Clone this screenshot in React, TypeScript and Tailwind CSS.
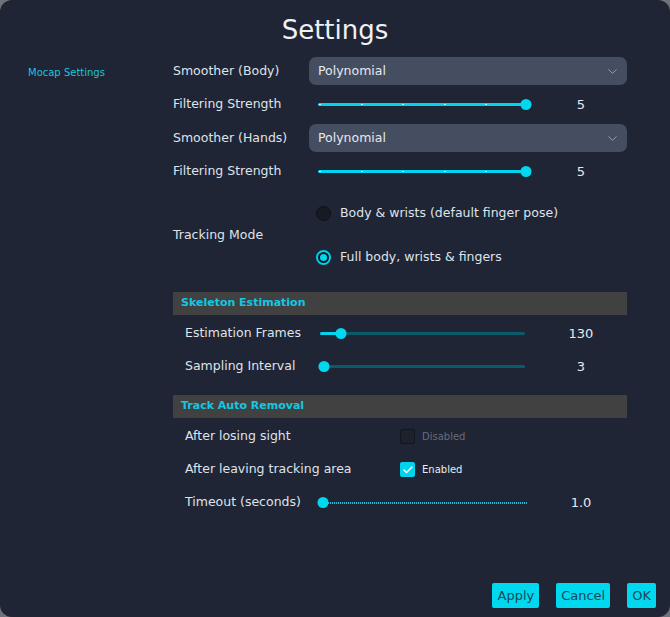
import { ChevronDown, Check } from "lucide-react";

const FONT = { fontFamily: '"DejaVu Sans", "Liberation Sans", sans-serif' };

type SliderProps = {
  width: number;
  pos: number; // 0..1
  kind: "ticks" | "range" | "dotted";
};

function Slider({ width, pos, kind }: SliderProps) {
  const left = Math.round(pos * width);
  return (
    <div className="relative h-[12px]" style={{ width }}>
      {kind === "dotted" ? (
        <div className="absolute left-0 right-0 top-[5px] h-[2px] bg-[repeating-linear-gradient(90deg,#2bb4c8_0_1px,#0b4655_1px_2px)]" />
      ) : (
        <div className="absolute left-0 right-0 top-[4.5px] h-[3px] rounded-full bg-[#0b5a6a]" />
      )}
      {kind !== "dotted" && (
        <div
          className="absolute left-0 top-[4.5px] h-[3px] rounded-full bg-[#00d5ee]"
          style={{ width: left }}
        />
      )}
      {kind === "ticks" &&
        [0, 0.2, 0.4, 0.6, 0.8].map((t) => (
          <div
            key={t}
            className="absolute top-[5.5px] h-[1px] w-[2px] bg-[#c9f6fc]"
            style={{ left: Math.round(t * width) + 1 }}
          />
        ))}
      <div
        className="absolute top-[0.5px] h-[11px] w-[11px] -translate-x-1/2 rounded-full bg-[#00d8f0]"
        style={{ left }}
      />
    </div>
  );
}

function Dropdown({ value }: { value: string }) {
  return (
    <div className="flex h-[28px] w-[318px] items-center justify-between rounded-[7px] bg-[#454d60] pl-[9px] pr-[7px] text-[12.5px] text-[#e6e9ee]">
      <span>{value}</span>
      <ChevronDown size={15} strokeWidth={1.3} className="text-[#aab1bd]" />
    </div>
  );
}

function SectionHeader({ title }: { title: string }) {
  return (
    <div className="flex h-[23px] items-center bg-[#414141] pl-[8px] text-[11px] font-bold text-[#12c8e2]">
      {title}
    </div>
  );
}

function Radio({ checked, label }: { checked: boolean; label: string }) {
  return (
    <div className="flex h-[44px] items-center pl-[7px] text-[12.5px] text-[#dfe3ea]">
      {checked ? (
        <span className="flex h-[15px] w-[15px] items-center justify-center rounded-full border-2 border-[#00d3ec] bg-[#141922]">
          <span className="h-[7px] w-[7px] rounded-full bg-[#00d8f0]" />
        </span>
      ) : (
        <span className="h-[15px] w-[15px] rounded-full border border-[#0e1218] bg-[#151a23]" />
      )}
      <span className="ml-[9px]">{label}</span>
    </div>
  );
}

function TopSliderRow({ label, value }: { label: string; value: string }) {
  return (
    <div className="flex h-[39px] items-center">
      <div className="w-[136px]">{label}</div>
      <div className="pl-[9px]">
        <Slider width={208} pos={1} kind="ticks" />
      </div>
      <div className="ml-[25px] w-[60px] text-center text-[13px] text-[#e6e9ee]">{value}</div>
    </div>
  );
}

function SubSliderRow({
  label,
  value,
  pos,
  kind,
  width,
}: {
  label: string;
  value: string;
  pos: number;
  kind: "range" | "dotted";
  width: number;
}) {
  return (
    <div className="flex h-[33px] items-center">
      <div className="w-[147px] pl-[12px]">{label}</div>
      <Slider width={width} pos={pos} kind={kind} />
      <div
        className="w-[60px] text-center text-[13px] text-[#e6e9ee]"
        style={{ marginLeft: 231 - width }}
      >
        {value}
      </div>
    </div>
  );
}

function CheckRow({ label, enabled }: { label: string; enabled: boolean }) {
  return (
    <div className="flex h-[33px] items-center">
      <div className="w-[227px] pl-[12px]">{label}</div>
      {enabled ? (
        <span className="flex h-[15px] w-[15px] items-center justify-center rounded-[2px] bg-[#00d3ec]">
          <Check size={12} strokeWidth={3} className="text-white" />
        </span>
      ) : (
        <span className="h-[15px] w-[15px] rounded-[2px] border border-[#12161d] bg-[#1b212d]" />
      )}
      <span
        className={
          enabled
            ? "ml-[7px] text-[10px] text-[#e8ebf0]"
            : "ml-[7px] text-[10px] text-[#666d78]"
        }
      >
        {enabled ? "Enabled" : "Disabled"}
      </span>
    </div>
  );
}

export default function App() {
  return (
    <div className="h-[617px] w-[670px] bg-[#6e727a]" style={FONT}>
      <div className="flex h-full flex-col rounded-[12px] bg-[#1f2535] text-[12.5px] text-[#dfe3ea]">
        <div className="flex h-[57px] items-center justify-center pt-[4px] text-[26px] text-[#eef1f5]">
          Settings
        </div>

        <div className="flex flex-1">
          <aside className="w-[173px] pl-[28px]">
            <div className="flex h-[30px] items-center text-[10px] text-[#1ec3dc]">
              Mocap Settings
            </div>
          </aside>

          <main className="w-[454px]">
            <div className="flex h-[28px] items-center">
              <div className="w-[136px]">Smoother (Body)</div>
              <Dropdown value="Polynomial" />
            </div>
            <TopSliderRow label="Filtering Strength" value="5" />
            <div className="flex h-[28px] items-center">
              <div className="w-[136px]">Smoother (Hands)</div>
              <Dropdown value="Polynomial" />
            </div>
            <TopSliderRow label="Filtering Strength" value="5" />

            <div className="flex items-center">
              <div className="w-[136px]">Tracking Mode</div>
              <div className="flex flex-col">
                <Radio checked={false} label="Body & wrists (default finger pose)" />
                <Radio checked label="Full body, wrists & fingers" />
              </div>
            </div>

            <div className="mt-[13px]">
              <SectionHeader title="Skeleton Estimation" />
            </div>
            <div className="mt-[2px]">
              <SubSliderRow label="Estimation Frames" value="130" pos={0.1} kind="range" width={205} />
              <SubSliderRow label="Sampling Interval" value="3" pos={0.02} kind="range" width={205} />
            </div>

            <div className="mt-[12px]">
              <SectionHeader title="Track Auto Removal" />
            </div>
            <div className="mt-[2px]">
              <CheckRow label="After losing sight" enabled={false} />
              <CheckRow label="After leaving tracking area" enabled />
              <SubSliderRow label="Timeout (seconds)" value="1.0" pos={0.015} kind="dotted" width={207} />
            </div>
          </main>
        </div>

        <footer className="flex justify-end gap-[17px] pb-[9px] pr-[14px]">
          {["Apply", "Cancel", "OK"].map((b) => (
            <button
              key={b}
              className="h-[25px] rounded-[2px] bg-[#00d8f0] px-[5px] text-[13px] text-[#1b4756]"
            >
              {b}
            </button>
          ))}
        </footer>
      </div>
    </div>
  );
}
